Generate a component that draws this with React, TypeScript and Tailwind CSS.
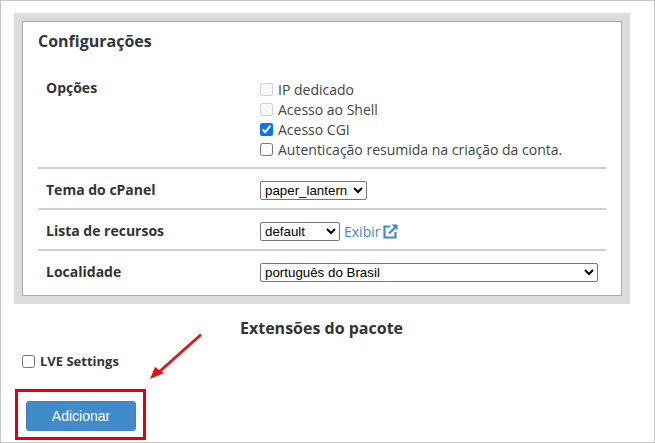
export default function App() {
  const open = { fontFamily: '"Open Sans", sans-serif' };
  const arial = { fontFamily: '"Liberation Sans", sans-serif' };
  return (
    <div className="relative w-[655px] h-[443px] overflow-hidden bg-white border border-[#c8c8c8] text-[#333]" style={open}>
      <div className="ml-[13px] mr-[24px] mt-[12px] bg-[#dcdcdc] p-[8px]">
        <div className="bg-white border border-[#aaaaaa] h-[275px] px-[15px]">
          <h2 className="text-[16px] leading-[22px] font-bold mt-[8px] text-[#2f3640]">Configurações</h2>
          <div className="mt-[24px] flex h-[93px] border-b-2 border-[#cfcfcf]">
            <div className="w-[222px] pl-[8px] pt-[2px] text-[14px] leading-[20px] font-bold">Opções</div>
            <div className="flex flex-col pt-[3px] text-[14px] leading-[20px] text-[#444]">
              <label className="flex items-center h-[20px]"><input type="checkbox" disabled className="w-[13px] h-[13px] m-0 mr-[5px]" /><span className="pt-[2px]">IP dedicado</span></label>
              <label className="flex items-center h-[20px]"><input type="checkbox" disabled className="w-[13px] h-[13px] m-0 mr-[5px]" /><span className="pt-[2px]">Acesso ao Shell</span></label>
              <label className="flex items-center h-[20px]"><input type="checkbox" defaultChecked className="w-[13px] h-[13px] m-0 mr-[5px]" /><span className="pt-[2px]">Acesso CGI</span></label>
              <label className="flex items-center h-[20px]"><input type="checkbox" className="w-[13px] h-[13px] m-0 mr-[5px]" /><span className="pt-[2px]">Autenticação resumida na criação da conta.</span></label>
            </div>
          </div>
          <div className="flex items-center h-[41px] pt-[3px] border-b-2 border-[#cfcfcf]">
            <div className="w-[222px] pl-[8px] pb-[2px] text-[14px] font-bold">Tema do cPanel</div>
            <select defaultValue="paper_lantern" className="h-[19px] w-[107px] text-[13.33px] border border-[#767676] rounded-[2px] bg-white text-black" style={arial}>
              <option>paper_lantern</option>
            </select>
          </div>
          <div className="flex items-center h-[41px] pt-[3px] border-b-2 border-[#cfcfcf]">
            <div className="w-[222px] pl-[8px] pb-[2px] text-[14px] font-bold">Lista de recursos</div>
            <select defaultValue="default" className="h-[19px] w-[80px] text-[13.33px] border border-[#767676] rounded-[2px] bg-white text-black" style={arial}>
              <option>default</option>
            </select>
            <a className="ml-[4px] text-[14px] text-[#428bca] flex items-center gap-[3px]">
              Exibir
              <svg width="15" height="15" viewBox="0 0 15 15" fill="none" stroke="#428bca" strokeWidth="2.2">
                <path d="M7 2.5H1.5v11h11V8" />
                <path d="M6 9.5 12.5 3" />
                <path d="M8.5 0.5h6v6z" fill="#428bca" stroke="none" />
              </svg>
            </a>
          </div>
          <div className="flex items-center h-[41px] pt-[2px]">
            <div className="w-[222px] pl-[8px] pb-[2px] text-[14px] font-bold">Localidade</div>
            <select defaultValue="português do Brasil" className="h-[19px] w-[338px] text-[13.33px] border border-[#767676] rounded-[2px] bg-white text-black" style={arial}>
              <option>português do Brasil</option>
            </select>
          </div>
        </div>
      </div>
      <h3 className="mt-[13px] ml-[239px] text-[16px] leading-[22px] font-bold text-[#333]">Extensões do pacote</h3>
      <label className="mt-[12px] ml-[21px] flex items-center text-[13px] leading-[20px] font-bold text-[#333]">
        <input type="checkbox" className="w-[13px] h-[13px] m-0 mr-[5px]" />LVE Settings
      </label>
      <button className="mt-[30px] ml-[25px] block w-[110px] h-[30px] bg-[#428bca] rounded-[3px] text-white text-[14px] border border-[#3e84c0]" style={arial}>Adicionar</button>
      <div className="absolute left-[14px] top-[388px] w-[131px] h-[51px] border-[3px] border-[#e0000f]" />
      <svg className="absolute left-[149px] top-[333px]" width="54" height="48" viewBox="0 0 54 48">
        <path d="M50 1.5 9 38" stroke="#e5141e" strokeWidth="3" strokeLinecap="round" fill="none" />
        <path d="M0 45 5 33 14 39z" fill="#e5141e" />
      </svg>
    </div>
  );
}
